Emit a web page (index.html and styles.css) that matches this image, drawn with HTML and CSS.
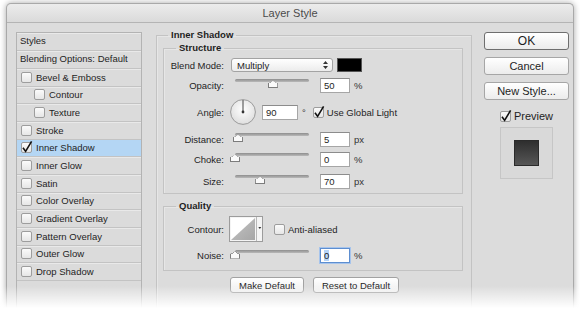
FILE: index.html
```html
<!DOCTYPE html>
<html lang="en">
  <head>
    <meta charset="UTF-8" />
    <title>Layer Style</title>
    <link rel="stylesheet" href="styles.css">
  </head>
  <body>
    <div class="window">
      <div class="titlebar">Layer Style</div>
      <div class="content">
        <div class="styles-list">
          <div class="list-row list-head">Styles</div>
          <div class="list-row list-head">Blending Options: Default</div>
          <div class="list-row"><span class="check"></span>Bevel &amp; Emboss</div>
          <div class="list-row sub"><span class="check"></span>Contour</div>
          <div class="list-row sub"><span class="check"></span>Texture</div>
          <div class="list-row"><span class="check"></span>Stroke</div>
          <div class="list-row selected">
            <span class="check"><svg width="11" height="11" viewBox="0 0 11 11"><path d="M2 5.8 L4.6 9.4 L10.6 -0.6" /></svg></span>Inner Shadow
          </div>
          <div class="list-row"><span class="check"></span>Inner Glow</div>
          <div class="list-row"><span class="check"></span>Satin</div>
          <div class="list-row"><span class="check"></span>Color Overlay</div>
          <div class="list-row"><span class="check"></span>Gradient Overlay</div>
          <div class="list-row"><span class="check"></span>Pattern Overlay</div>
          <div class="list-row"><span class="check"></span>Outer Glow</div>
          <div class="list-row"><span class="check"></span>Drop Shadow</div>
        </div>

        <div class="settings">
          <fieldset class="group outer">
            <legend>Inner Shadow</legend>

            <fieldset class="group inner structure">
              <legend>Structure</legend>
              <div class="row r-blend">
                <span class="lbl">Blend Mode:</span>
                <div class="select">
                  Multiply
                  <svg width="5" height="8" viewBox="0 0 5 8"><path d="M2.5 0 L5 3 H0 Z M2.5 8 L5 5 H0 Z" /></svg>
                </div>
                <div class="swatch"></div>
              </div>
              <div class="row r-opacity">
                <span class="lbl">Opacity:</span>
                <div class="slider"><span class="track"></span><span class="thumb" style="left: 51%"></span></div>
                <div class="field">50</div><span class="unit">%</span>
              </div>
              <div class="row r-angle">
                <span class="lbl">Angle:</span>
                <svg class="dial" width="26" height="26" viewBox="0 0 26 26">
                  <defs>
                    <radialGradient id="dialFill" cx="50%" cy="40%" r="60%">
                      <stop offset="0" stop-color="#ffffff" />
                      <stop offset="1" stop-color="#dedede" />
                    </radialGradient>
                  </defs>
                  <circle cx="13" cy="13" r="12.4" fill="url(#dialFill)" stroke="#9a9a9a" stroke-width="1" />
                  <line x1="13" y1="13" x2="13" y2="1" stroke="#444" stroke-width="1" />
                  <circle cx="13" cy="13" r="1.4" fill="#333" />
                </svg>
                <div class="field wide">90</div><span class="unit deg">°</span>
                <span class="check"><svg width="11" height="11" viewBox="0 0 11 11"><path d="M2 5.8 L4.6 9.4 L10.6 -0.6" /></svg></span>
                <span class="check-text">Use Global Light</span>
              </div>
              <div class="row r-distance">
                <span class="lbl">Distance:</span>
                <div class="slider"><span class="track"></span><span class="thumb" style="left: 4%"></span></div>
                <div class="field">5</div><span class="unit">px</span>
              </div>
              <div class="row r-choke">
                <span class="lbl">Choke:</span>
                <div class="slider"><span class="track"></span><span class="thumb" style="left: 0%"></span></div>
                <div class="field">0</div><span class="unit">%</span>
              </div>
              <div class="row r-size">
                <span class="lbl">Size:</span>
                <div class="slider"><span class="track"></span><span class="thumb" style="left: 34%"></span></div>
                <div class="field">70</div><span class="unit">px</span>
              </div>
            </fieldset>

            <fieldset class="group inner quality">
              <legend>Quality</legend>
              <div class="row r-contour">
                <span class="lbl">Contour:</span>
                <svg class="contour" width="34" height="26" viewBox="0 0 34 26">
                  <defs>
                    <linearGradient id="contourFill" x1="0" y1="0" x2="1" y2="1">
                      <stop offset="0" stop-color="#c4c4c4" />
                      <stop offset="1" stop-color="#a6a6a6" />
                    </linearGradient>
                  </defs>
                  <rect x="0.5" y="0.5" width="33" height="25" fill="#f4f4f4" stroke="#9c9c9c" />
                  <rect x="2" y="2" width="24" height="22" fill="#ffffff" />
                  <path d="M2 24 L26 2 V24 Z" fill="url(#contourFill)" />
                  <line x1="27.5" y1="1" x2="27.5" y2="25" stroke="#b8b8b8" />
                  <path d="M29.3 11 H32.3 L30.8 13 Z" fill="#333" />
                </svg>
                <span class="check"></span>
                <span class="check-text">Anti-aliased</span>
              </div>
              <div class="row r-noise">
                <span class="lbl">Noise:</span>
                <div class="slider"><span class="track"></span><span class="thumb" style="left: 0%"></span></div>
                <div class="field focused"><span class="sel">0</span></div><span class="unit">%</span>
              </div>
            </fieldset>

            <div class="defaults">
              <button class="small-btn">Make Default</button>
              <button class="small-btn">Reset to Default</button>
            </div>
          </fieldset>
        </div>

        <div class="actions">
          <button class="btn default">OK</button>
          <button class="btn">Cancel</button>
          <button class="btn">New Style...</button>
          <div class="preview-toggle">
            <span class="check"><svg width="11" height="11" viewBox="0 0 11 11"><path d="M2 5.8 L4.6 9.4 L10.6 -0.6" /></svg></span>
            <span class="preview-text">Preview</span>
          </div>
          <div class="preview-box"><div class="preview-swatch"></div></div>
        </div>
      </div>
    </div>
    <div class="fade"></div>
  </body>
</html>
```

FILE: styles.css
```css
html,
body {
  margin: 0;
  height: 312px;
  overflow: hidden;
  background: #ffffff;
}
body {
  padding: 3px 6px 0;
  box-sizing: border-box;
  font-family: "Liberation Sans", Arial, sans-serif;
  font-size: 9.5px;
  color: #1e1e1e;
}
.window {
  width: 568px;
  height: 309px;
  box-sizing: border-box;
  display: flex;
  flex-direction: column;
  background: #dcdcdc;
  border: 1px solid #a9a9a9;
  border-bottom: none;
  border-radius: 5px 5px 0 0;
  box-shadow: 0 0 6px rgba(0, 0, 0, 0.35);
}
.titlebar {
  height: 18px;
  line-height: 18px;
  text-align: center;
  font-size: 11px;
  color: #4b4b4b;
  background: linear-gradient(#ececec, #dadada);
  border-bottom: 1px solid #b4b4b4;
  border-radius: 5px 5px 0 0;
}
.content {
  flex: 1;
  display: flex;
  padding: 6px 4px 0 9px;
}

/* left list */
.styles-list {
  width: 126px;
  box-sizing: border-box;
  margin-top: 3px;
  border: 1px solid #b3b3b3;
  border-bottom: none;
  background: #dbdbdb;
}
.list-row {
  height: 17.67px;
  box-sizing: border-box;
  display: flex;
  align-items: center;
  padding-left: 4px;
  border-bottom: 1px solid #c3c3c3;
  box-shadow: inset 0 1px 0 #e9e9e9;
  white-space: nowrap;
}
.list-head {
  height: 18px;
  padding-left: 3px;
  padding-bottom: 3px;
}
.list-row.sub {
  padding-left: 17px;
}
.list-row.selected {
  background: #b4d6f4;
  box-shadow: none;
}
.check {
  width: 11px;
  height: 11px;
  box-sizing: border-box;
  flex: none;
  margin-right: 4px;
  border: 1px solid #9d9d9d;
  border-radius: 2px;
  background: linear-gradient(#fbfbfb, #e6e6e6);
}
.check svg {
  display: block;
  margin: -1px;
  overflow: visible;
}
.check path {
  fill: none;
  stroke: #111111;
  stroke-width: 1.6;
}

/* middle panel */
.settings {
  width: 316px;
  margin-left: 14px;
  display: flex;
  flex-direction: column;
}
.group {
  margin: 0;
  min-width: 0;
  border: 1px solid #c3c3c3;
  box-shadow: inset 1px 1px 0 #e6e6e6;
}
.group legend {
  font-weight: bold;
  line-height: 12px;
  padding: 0 3px;
}
.outer {
  flex: 1;
  padding: 1px 8px 0 6px;
  border-bottom: none;
}
.outer > legend {
  margin-left: 5px;
}
.inner {
  padding: 0 0 1px 0;
}
.inner > legend {
  margin-left: 12px;
}
.quality {
  margin-top: 6px;
  padding-bottom: 4px;
}
.row {
  display: flex;
  align-items: center;
  white-space: nowrap;
}
.r-blend { height: 22px; }
.r-opacity { height: 18px; }
.r-angle { height: 36px; }
.r-distance { height: 18px; }
.r-choke { height: 22px; }
.r-size { height: 22px; }
.r-contour { height: 32px; margin-top: 1px; }
.r-noise { height: 21px; }
.lbl {
  width: 60px;
  text-align: right;
  margin-right: 7px;
  flex: none;
}
.select {
  width: 102px;
  height: 14px;
  box-sizing: border-box;
  display: flex;
  align-items: center;
  justify-content: space-between;
  padding: 0 4px 0 5px;
  border: 1px solid #a3a3a3;
  border-radius: 3px;
  background: linear-gradient(#ffffff, #ececec);
}
.select path {
  fill: #333333;
}
.swatch {
  width: 25px;
  height: 14px;
  box-sizing: border-box;
  margin-left: 4px;
  background: #000000;
  border: 1px solid #555555;
}
.slider {
  position: relative;
  width: 74px;
  height: 12px;
  margin: 0 11px 0 4px;
  align-self: center;
  flex: none;
}
.track {
  display: block;
  height: 3px;
  border-radius: 2px;
  background: linear-gradient(#8e8e8e, #b9b9b9);
}
.thumb {
  position: absolute;
  top: 2px;
  width: 10px;
  height: 7px;
  transform: translateX(-50%);
  background: #fafafa;
  border: 1px solid #7c7c7c;
  border-top: none;
  box-sizing: border-box;
  clip-path: polygon(0 35%, 50% 0, 100% 35%, 100% 100%, 0 100%);
}
.thumb::before {
  content: "";
  position: absolute;
  left: -1px;
  right: -1px;
  top: -1px;
  height: 4px;
  background: linear-gradient(to bottom right, transparent 45%, #7c7c7c 46%, #7c7c7c 56%, transparent 57%) left / 50% 100% no-repeat,
    linear-gradient(to bottom left, transparent 45%, #7c7c7c 46%, #7c7c7c 56%, transparent 57%) right / 50% 100% no-repeat;
}
.field {
  width: 30px;
  height: 15px;
  box-sizing: border-box;
  padding-left: 3px;
  line-height: 13px;
  flex: none;
  background: #ffffff;
  border: 1px solid #a6a6a6;
  border-top-color: #8c8c8c;
}
.field.wide {
  width: 36px;
}
.field.focused {
  border-color: #5d8ed0;
  box-shadow: 0 0 0 1px #a6c4ec;
}
.sel {
  background: #b4d4f8;
}
.unit {
  margin-left: 4px;
  color: #333333;
}
.unit.deg {
  margin-right: 7px;
}
.dial {
  margin: 0 6px 0 -1px;
  flex: none;
}
.check-text {
  margin-left: -1px;
}
.contour {
  margin: 0 11px 0 -2px;
  flex: none;
}
.defaults {
  display: flex;
  justify-content: center;
  gap: 9px;
  margin-top: 6px;
  padding-left: 3px;
}
.small-btn {
  height: 16px;
  padding: 0;
  white-space: nowrap;
  font-family: inherit;
  font-size: 9.5px;
  color: #1e1e1e;
  background: linear-gradient(#ffffff, #eeeeee);
  border: 1px solid #a2a2a2;
  border-radius: 3px;
}
.small-btn:first-child {
  width: 74px;
}
.small-btn:last-child {
  width: 86px;
}

/* right column */
.actions {
  width: 85px;
  margin-left: 12px;
  margin-top: 3px;
  display: flex;
  flex-direction: column;
  align-items: center;
}
.btn {
  width: 85px;
  height: 18px;
  margin-bottom: 7px;
  font-family: inherit;
  font-size: 11px;
  color: #1e1e1e;
  background: linear-gradient(#ffffff, #ececec);
  border: 1px solid #a6a6a6;
  border-radius: 3px;
}
.btn.default {
  border-color: #6e6e6e;
  font-size: 12px;
}
.preview-toggle {
  display: flex;
  align-items: center;
  height: 14px;
  margin-top: 2px;
  font-size: 11px;
}
.preview-toggle .check {
  margin-right: 3px;
}
.preview-box {
  width: 53px;
  height: 52px;
  box-sizing: border-box;
  margin-top: 4px;
  display: flex;
  align-items: center;
  justify-content: center;
  background: #d9d9d9;
  border: 1px solid #c6c6c6;
}
.preview-swatch {
  width: 25px;
  height: 26px;
  box-sizing: border-box;
  background: linear-gradient(#2e2e2e, #565656);
  border: 1px solid #2a2a2a;
}

.fade {
  position: absolute;
  left: 0;
  right: 0;
  bottom: 0;
  height: 26px;
  background: linear-gradient(rgba(255, 255, 255, 0), #ffffff 85%);
}
```
